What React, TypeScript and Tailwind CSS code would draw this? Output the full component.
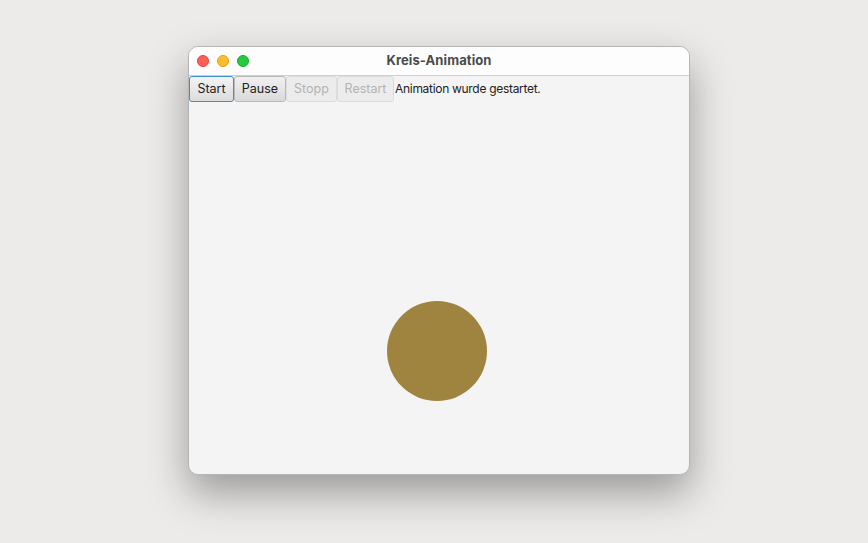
export default function App() {
    return (
        <div className="w-[868px] h-[543px] bg-[#ecebe9] flex items-start justify-center pt-[46px] pl-[10px] [font-family:Inter,'Liberation_Sans',sans-serif]">
            {/* Window */}
            <div className="w-[502px] h-[429px] rounded-[10px] border border-[#b5b5b5] bg-[#f4f4f4] overflow-hidden flex flex-col shadow-[0_18px_40px_rgba(0,0,0,0.35)]">
                {/* Title bar */}
                <div className="h-[29px] shrink-0 bg-[#fdfdfd] border-b border-[#cfcfcf] flex items-center relative">
                    <div className="flex items-center gap-[8px] pl-[8px]">
                        <span className="w-[12px] h-[12px] rounded-full bg-[#fe5f57] border border-[#e2463f]" />
                        <span className="w-[12px] h-[12px] rounded-full bg-[#febc2e] border border-[#e1a116]" />
                        <span className="w-[12px] h-[12px] rounded-full bg-[#28c840] border border-[#14ae2c]" />
                    </div>
                    <div className="absolute inset-0 flex items-center justify-center pointer-events-none">
                        <span className="text-[13px] font-bold text-[#4a4a4a] tracking-[0.1px]">Kreis-Animation</span>
                    </div>
                </div>

                {/* Toolbar */}
                <div className="flex items-center h-[26px] shrink-0">
                    <button className="h-[26px] w-[45px] border border-[#3c8fd0] rounded-[3px] bg-gradient-to-b from-[#f3f3f3] to-[#dcdcdc] text-[12.5px] text-[#222]">
                        Start
                    </button>
                    <button className="h-[26px] w-[52px] border border-[#b9b9b9] rounded-[3px] bg-gradient-to-b from-[#f0f0f0] to-[#dadada] text-[12.5px] text-[#222]">
                        Pause
                    </button>
                    <button className="h-[26px] w-[51px] border border-[#dcdcdc] rounded-[3px] bg-[#ececec] text-[12.5px] text-[#b3b3b3]">
                        Stopp
                    </button>
                    <button className="h-[26px] w-[57px] border border-[#dcdcdc] rounded-[3px] bg-[#ececec] text-[12.5px] text-[#b3b3b3]">
                        Restart
                    </button>
                    <span className="pl-[1px] text-[12px] text-[#222] tracking-[-0.3px]">Animation wurde gestartet.</span>
                </div>

                {/* Canvas */}
                <div className="relative flex-1">
                    <div className="absolute left-[198px] top-[199px] w-[100px] h-[100px] rounded-full bg-[#9e843e]" />
                </div>
            </div>
        </div>
    );
}
